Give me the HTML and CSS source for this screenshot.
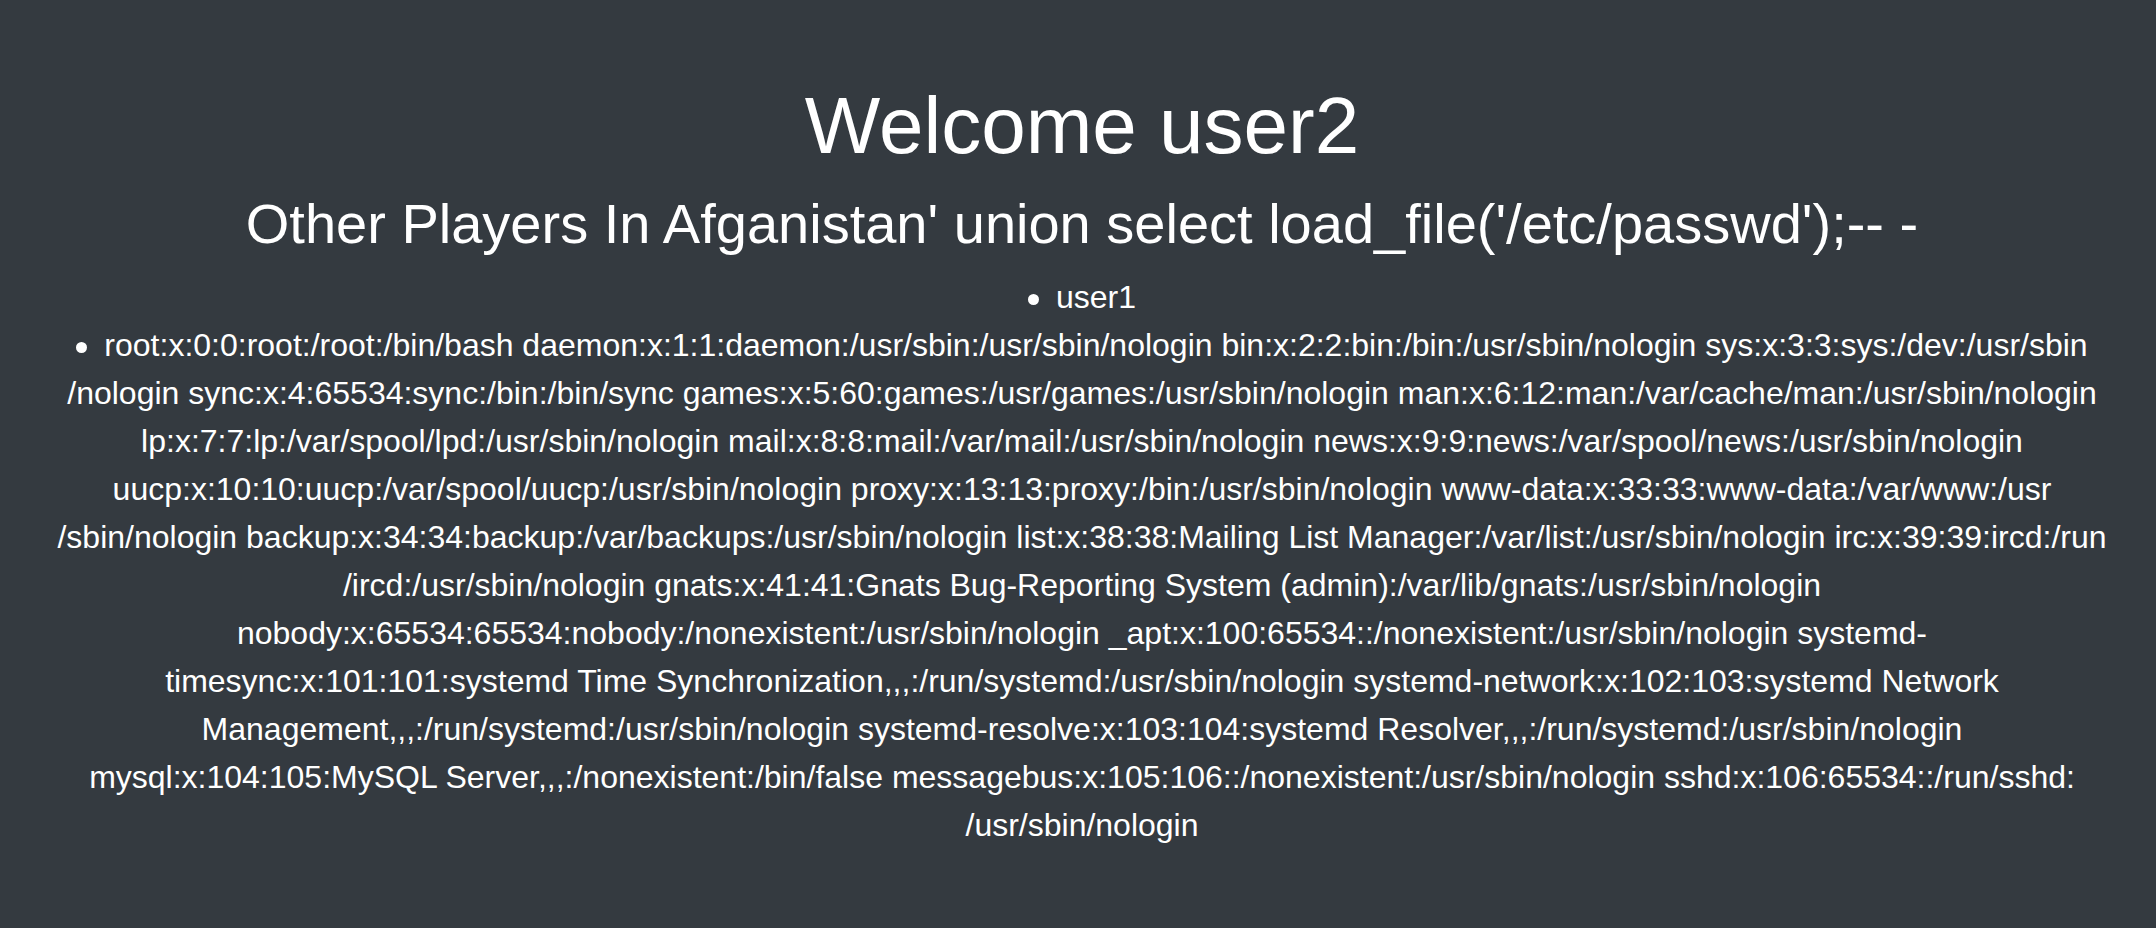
FILE: index.html
```html
<!DOCTYPE html>
<html>
<head>
<meta charset="utf-8">
<title>Welcome</title>
<link rel="stylesheet" href="styles.css">
</head>
<body>
<div class="page">
  <h1 class="title">Welcome user2</h1>
  <h2 class="subtitle">Other Players In Afganistan' union select load_file('/etc/passwd');-- -</h2>
  <ul class="players">
    <li>user1</li>
    <li>root:x:0:0:root:/root:/bin/bash daemon:x:1:1:daemon:/usr/sbin:/usr/sbin/nologin bin:x:2:2:bin:/bin:/usr/sbin/nologin sys:x:3:3:sys:/dev:/usr/sbin<br>/nologin sync:x:4:65534:sync:/bin:/bin/sync games:x:5:60:games:/usr/games:/usr/sbin/nologin man:x:6:12:man:/var/cache/man:/usr/sbin/nologin<br>lp:x:7:7:lp:/var/spool/lpd:/usr/sbin/nologin mail:x:8:8:mail:/var/mail:/usr/sbin/nologin news:x:9:9:news:/var/spool/news:/usr/sbin/nologin<br>uucp:x:10:10:uucp:/var/spool/uucp:/usr/sbin/nologin proxy:x:13:13:proxy:/bin:/usr/sbin/nologin www-data:x:33:33:www-data:/var/www:/usr<br>/sbin/nologin backup:x:34:34:backup:/var/backups:/usr/sbin/nologin list:x:38:38:Mailing List Manager:/var/list:/usr/sbin/nologin irc:x:39:39:ircd:/run<br>/ircd:/usr/sbin/nologin gnats:x:41:41:Gnats Bug-Reporting System (admin):/var/lib/gnats:/usr/sbin/nologin<br>nobody:x:65534:65534:nobody:/nonexistent:/usr/sbin/nologin _apt:x:100:65534::/nonexistent:/usr/sbin/nologin systemd-<br>timesync:x:101:101:systemd Time Synchronization,,,:/run/systemd:/usr/sbin/nologin systemd-network:x:102:103:systemd Network<br>Management,,,:/run/systemd:/usr/sbin/nologin systemd-resolve:x:103:104:systemd Resolver,,,:/run/systemd:/usr/sbin/nologin<br>mysql:x:104:105:MySQL Server,,,:/nonexistent:/bin/false messagebus:x:105:106::/nonexistent:/usr/sbin/nologin sshd:x:106:65534::/run/sshd:<br>/usr/sbin/nologin</li>
  </ul>
</div>
</body>
</html>
```

FILE: styles.css
```css
html, body {
  margin: 0;
  padding: 0;
}
body {
  background: #343a40;
  color: #fff;
  font-family: "Liberation Sans", Arial, sans-serif;
  min-height: 928px;
}
.page {
  padding: 78px 15px 0 23px;
  text-align: center;
}
.title {
  margin: 0 0 16px;
  font-size: 80px;
  font-weight: 400;
  line-height: 1.2;
}
.subtitle {
  margin: 0 0 16px;
  font-size: 56px;
  font-weight: 400;
  line-height: 1.2;
}
.players {
  margin: 0;
  padding: 0;
  list-style: none;
  font-size: 32px;
  line-height: 48px;
}
.players li::before {
  content: "";
  display: inline-block;
  width: 11px;
  height: 11px;
  border-radius: 50%;
  background: #fff;
  margin-right: 17px;
  vertical-align: middle;
}
```
